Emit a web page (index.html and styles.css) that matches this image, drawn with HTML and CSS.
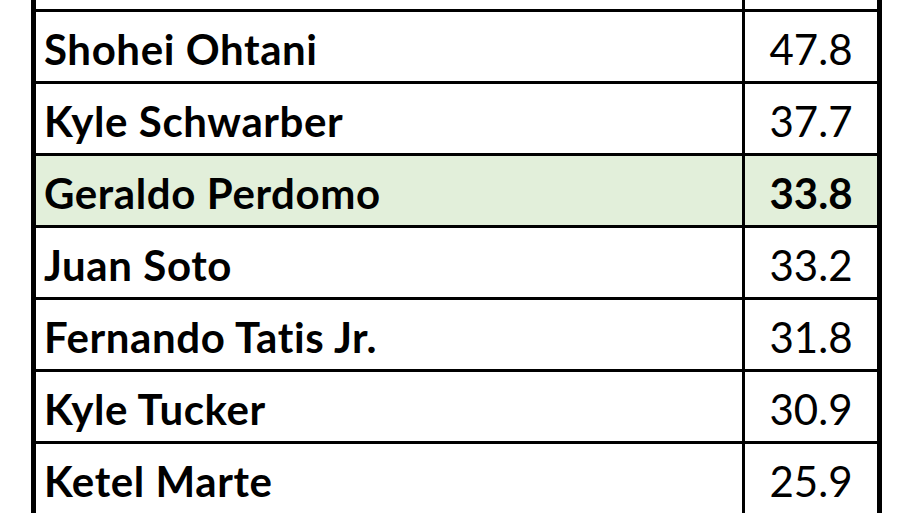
FILE: index.html
```html
<!DOCTYPE html>
<html>
<head>
<meta charset="utf-8">
<link rel="stylesheet" href="styles.css">
</head>
<body>
<div class="sheet">
  <div class="row stub"><div class="name"></div><div class="num"></div></div>
  <div class="row"><div class="name">Shohei Ohtani</div><div class="num">47.8</div></div>
  <div class="row"><div class="name">Kyle Schwarber</div><div class="num">37.7</div></div>
  <div class="row hl"><div class="name">Geraldo Perdomo</div><div class="num bold">33.8</div></div>
  <div class="row"><div class="name">Juan Soto</div><div class="num">33.2</div></div>
  <div class="row"><div class="name">Fernando Tatis Jr.</div><div class="num">31.8</div></div>
  <div class="row"><div class="name">Kyle Tucker</div><div class="num">30.9</div></div>
  <div class="row"><div class="name">Ketel Marte</div><div class="num">25.9</div></div>
</div>
</body>
</html>
```
FILE: styles.css
```css
html, body {
  margin: 0;
  padding: 0;
  background: #ffffff;
  overflow: hidden;
}
body {
  width: 912px;
  height: 513px;
  font-family: Lato, "Open Sans", sans-serif;
  font-variant-ligatures: none;
  color: #000;
}
.sheet {
  margin-left: 31px;
  width: 851px;
  box-sizing: border-box;
  border-left: 5px solid #000;
  border-right: 5px solid #000;
}
.row {
  display: grid;
  grid-template-columns: 706px 1fr;
  height: 72px;
  box-sizing: border-box;
  border-top: 3px solid #000;
}
.row.stub {
  height: 9px;
  border-top: none;
}
.hl {
  background: #e2efda;
}
.name {
  font-weight: 700;
  font-size: 42px;
  letter-spacing: 0.6px;
  padding-left: 8px;
  display: flex;
  align-items: center;
  padding-top: 4px;
}
.num {
  border-left: 3px solid #000;
  font-size: 42px;
  text-align: center;
  display: flex;
  align-items: center;
  justify-content: center;
  padding-top: 4px;
}
.num.bold {
  font-weight: 700;
}
.stub .name, .stub .num {
  padding-top: 0;
}
```
